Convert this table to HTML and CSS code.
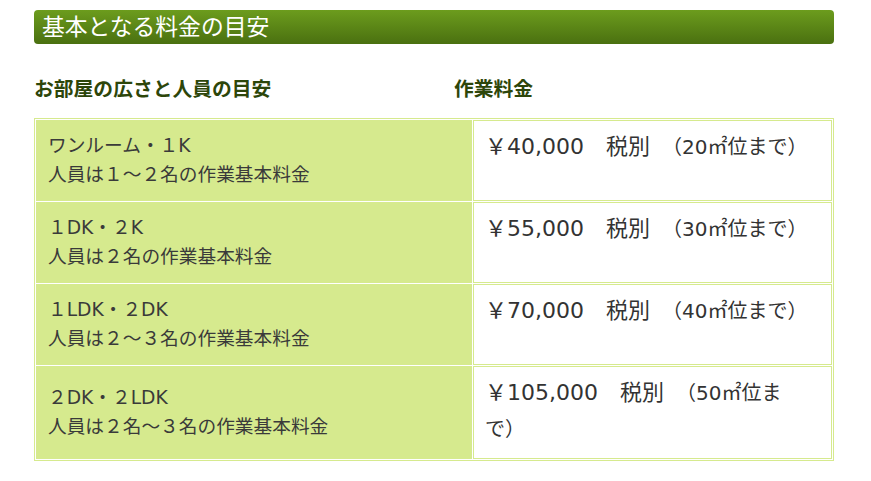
FILE: index.html
```html
<!DOCTYPE html>
<html lang="ja">
<head>
<meta charset="utf-8">
<link rel="stylesheet" href="styles.css">
</head>
<body>
<div class="page">
  <h2 class="title">基本となる料金の目安</h2>
  <div class="heads">
    <div class="head-size">お部屋の広さと人員の目安</div>
    <div class="head-price">作業料金</div>
  </div>
  <table class="price-table">
    <tr>
      <td class="room">ワンルーム・１K<br>人員は１～２名の作業基本料金</td>
      <td class="price"><span class="yen">￥40,000</span>　<span class="tax">税別</span>　<span class="note">（20㎡位まで）</span></td>
    </tr>
    <tr>
      <td class="room">１DK・２K<br>人員は２名の作業基本料金</td>
      <td class="price"><span class="yen">￥55,000</span>　<span class="tax">税別</span>　<span class="note">（30㎡位まで）</span></td>
    </tr>
    <tr>
      <td class="room">１LDK・２DK<br>人員は２～３名の作業基本料金</td>
      <td class="price"><span class="yen">￥70,000</span>　<span class="tax">税別</span>　<span class="note">（40㎡位まで）</span></td>
    </tr>
    <tr>
      <td class="room">２DK・２LDK<br>人員は２名～３名の作業基本料金</td>
      <td class="price"><span class="yen">￥105,000</span>　<span class="tax">税別</span>　<span class="note">（50㎡位まで）</span></td>
    </tr>
  </table>
</div>
</body>
</html>
```
FILE: styles.css
```css
html, body {
  margin: 0;
  padding: 0;
  background: #ffffff;
}
body {
  font-family: "DejaVu Sans", "Noto Sans CJK JP", sans-serif;
  color: #333333;
}
.page {
  width: 800px;
  margin-left: 34px;
  padding-top: 10px;
}
.title {
  margin: 0;
  height: 34px;
  line-height: 31px;
  padding-left: 8px;
  border-radius: 4px;
  background: linear-gradient(#6c9c1d, #4a7010);
  color: #ffffff;
  font-size: 22.8px;
  font-weight: normal;
  font-family: "Noto Sans CJK JP", sans-serif;
}
.heads {
  display: flex;
  margin-top: 31px;
  height: 26px;
  color: #2d460a;
  font-weight: bold;
  font-size: 19.8px;
  font-family: "Noto Sans CJK JP", sans-serif;
  line-height: 26px;
}
.head-size {
  width: 420px;
}
.price-table {
  margin-top: 17px;
  width: 800px;
  border: 1px solid #d6ea8e;
  border-spacing: 1px;
  border-collapse: separate;
}
.price-table td {
  border: 1px solid #d6ea8e;
}
.room {
  width: 412px;
  padding: 10px 11px 11px 11px;
  font-size: 18.7px;
  line-height: 29px;
  background: #d6ea8e;
  vertical-align: middle;
  color: #3a3a3a;
}
.price {
  vertical-align: top;
  background: #ffffff;
  padding: 8px 20px 11px 11px;
  font-size: 22px;
  line-height: 36px;
  color: #333333;
}
.price .note {
  font-size: 20px;
}
```
